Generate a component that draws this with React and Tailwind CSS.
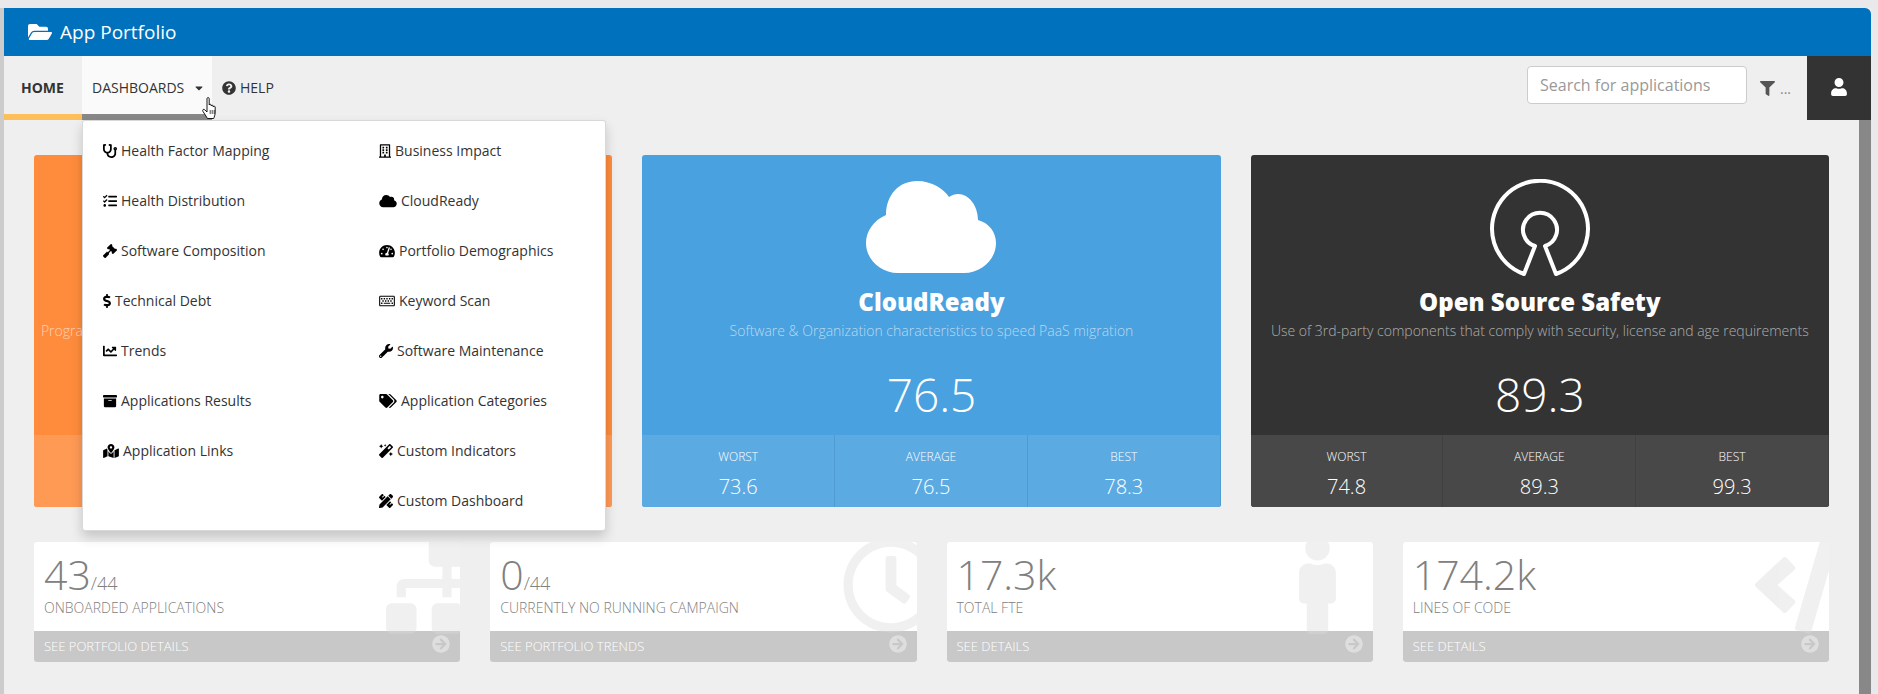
import {
  FaStethoscope, FaTasks, FaGavel, FaDollarSign, FaChartLine, FaArchive, FaMapMarkedAlt,
  FaRegBuilding, FaCloud, FaTachometerAlt, FaRegKeyboard, FaWrench, FaTags, FaMagic, FaPencilRuler,
  FaFolderOpen, FaQuestionCircle, FaFilter, FaUser, FaCaretDown, FaArrowCircleRight,
  FaSitemap, FaRegClock, FaMale, FaCode,
} from "react-icons/fa";

const leftMenu = [
  [FaStethoscope, "Health Factor Mapping", "w-[14px]"],
  [FaTasks, "Health Distribution", "w-[14px]"],
  [FaGavel, "Software Composition", "w-[14px]"],
  [FaDollarSign, "Technical Debt", "w-2"],
  [FaChartLine, "Trends", "w-[14px]"],
  [FaArchive, "Applications Results", "w-[14px]"],
  [FaMapMarkedAlt, "Application Links", "w-4"],
];

const rightMenu = [
  [FaRegBuilding, "Business Impact", "w-3"],
  [FaCloud, "CloudReady", "w-[18px]"],
  [FaTachometerAlt, "Portfolio Demographics", "w-4"],
  [FaRegKeyboard, "Keyword Scan", "w-4"],
  [FaWrench, "Software Maintenance", "w-[14px]"],
  [FaTags, "Application Categories", "w-[18px]"],
  [FaMagic, "Custom Indicators", "w-[14px]"],
  [FaPencilRuler, "Custom Dashboard", "w-[14px]"],
];

function CloudLogo() {
  return (
    <svg width="130" height="92" viewBox="0 0 130 92" className="mt-0.5" fill="#fff">
      <path d="M32 92C14 92 0 78 0 62C0 50 8 39 20 34C20 14 33 0 51 0C66 0 78 8 83 16C86 14 89 13 92 13C103 13 112 25 112 39C123 42 130 51 130 62C130 78 116 92 98 92Z" />
    </svg>
  );
}

function OpenSourceLogo() {
  return (
    <svg width="102" height="98" viewBox="0 0 102 98" fill="none" stroke="#fff" strokeWidth="4" strokeLinejoin="round">
      <path d="M35 95A48 48 0 1 1 67 95L56 67A17 17 0 1 0 46 67Z" />
    </svg>
  );
}

function HandCursor() {
  return (
    <svg width="18" height="23" viewBox="0 0 18 23" fill="#fff" stroke="#000" strokeWidth="0.9" className="absolute left-[197px] top-[41px] z-30">
      <path d="M6 1.5c0-1.2 2.2-1.2 2.2 0V8c0-1 2-1 2 0v1c0-1 2-1 2 0v1c0-1 2-1 2 0v5c0 3-1 5-1.5 6.5H6.5L2 14.5c-1-1.5.5-2.8 1.7-1.8L6 15Z" />
      <path d="M9.2 13v4M11.2 13v4M13.2 13v4" fill="none" strokeWidth="0.7" />
    </svg>
  );
}

function ScoreCard({ logo, title, desc, score, worst, best, bg, statBg, line }) {
  return (
    <div className={`rounded-[3px] flex flex-col h-[352px] overflow-hidden text-white ${bg}`}>
      <div className="h-[280px] pt-6 flex flex-col items-center text-center">
        <div className="h-[98px] flex justify-center">{logo}</div>
        <h2 className="mt-2 text-2xl leading-[33px] font-extrabold">{title}</h2>
        <p className="mt-[3px] text-sm leading-5 font-light text-white/60 whitespace-nowrap">{desc}</p>
        <div className="mt-5 text-[46px] leading-[66px] font-light">{score}</div>
      </div>
      <div className={`h-[72px] grid grid-cols-3 ${statBg}`}>
        {[["WORST", worst], ["AVERAGE", score], ["BEST", best]].map(([k, v]) => (
          <div key={k} className={`pt-[13px] text-center border-r ${line}`}>
            <div className="text-xs leading-[18px] font-light">{k}</div>
            <div className="mt-[7px] text-xl leading-7 font-light">{v}</div>
          </div>
        ))}
      </div>
    </div>
  );
}

function StatCard({ value, total, label, link, Icon, iconSize }) {
  return (
    <div className="relative h-[120px] rounded-[3px] overflow-hidden bg-white flex flex-col">
      <div className="h-[89px] pl-2.5 pt-[6px] text-[#808080]">
        <div className="h-[50px] flex items-baseline">
          <span className="text-[41px] leading-[52px] font-light">{value}</span>
          {total && <span className="text-lg font-light">{total}</span>}
        </div>
        <div className="text-sm leading-5 font-light uppercase">{label}</div>
      </div>
      <div className="h-[31px] pl-2.5 bg-[#c8c8c8] text-white text-[13px] font-light leading-[31px]">{link}</div>
      <Icon className={`absolute left-[352px] top-[-6px] h-[98px] text-[#d9d9d9] opacity-40 ${iconSize}`} />
      <FaArrowCircleRight className="absolute right-[10px] bottom-[9px] text-[18px] text-white/40" />
    </div>
  );
}

function MenuItem({ Icon, label, width }) {
  return (
    <a className="h-[50px] flex items-center gap-1 text-sm text-[#333]">
      <Icon className={`h-[14px] text-black shrink-0 ${width}`} />
      {label}
    </a>
  );
}

export default function App() {
  return (
    <div className="h-[694px] w-full overflow-hidden bg-[#e9e9eb] pt-2 pr-[7px] font-['Open_Sans',sans-serif]">
      <div className="h-full flex flex-col bg-[#efefef] border-l-4 border-[#cccccc]">
        <header className="h-12 shrink-0 bg-[#0071bc] rounded-tr-md flex items-center pl-6 text-white">
          <FaFolderOpen className="text-2xl" />
          <span className="ml-2 text-[19px]">App Portfolio</span>
        </header>

        <nav className="relative h-16 shrink-0 flex items-stretch text-[#333]">
          <div className="w-[78px] border-b-[6px] border-[#fdbf5c] flex items-center pt-[6px] pl-[17px] text-sm font-bold">HOME</div>
          <div className="w-[130px] bg-[#fafafa] border-b-[6px] border-[#888] flex items-center pt-[6px] pl-[10px] text-sm">
            DASHBOARDS
            <FaCaretDown className="ml-[9px] text-xs" />
          </div>
          <div className="flex items-center ml-[10px] text-sm">
            <FaQuestionCircle className="mr-1 text-sm" />
            HELP
          </div>
          <div className="ml-auto flex items-start">
            <input
              placeholder="Search for applications"
              className="mt-[10px] w-[220px] h-[38px] px-3 bg-white border border-[#ccc] rounded-[4px] text-base placeholder:text-[#999]"
            />
            <div className="mt-[25px] ml-[13px] w-[47px] flex items-center text-[#555]">
              <FaFilter className="text-[15px]" />
              <span className="ml-[5px] text-sm leading-none text-[#888]">...</span>
            </div>
            <div className="w-16 h-16 bg-[#333] flex items-center justify-center text-white">
              <FaUser className="text-lg mb-[3px]" />
            </div>
          </div>

          <div className="absolute left-[78px] top-16 z-20 w-[524px] h-[411px] py-[5px] px-5 bg-white border border-black/15 rounded-[3px] shadow-[0_6px_12px_rgba(0,0,0,0.175)] grid grid-cols-[276px_1fr]">
            <div>{leftMenu.map(([Icon, label, width]) => <MenuItem key={label} Icon={Icon} label={label} width={width} />)}</div>
            <div>{rightMenu.map(([Icon, label, width]) => <MenuItem key={label} Icon={Icon} label={label} width={width} />)}</div>
          </div>

          <HandCursor />
        </nav>

        <div className="flex-1 min-h-0 flex">
          <main className="flex-1 min-w-0 px-[30px] pt-[35px]">
            <div className="grid grid-cols-3 gap-[30px]">
              {/* most of this card sits behind the open menu */}
              <div className="rounded-[3px] flex flex-col h-[352px] overflow-hidden bg-[#ff8c3c]">
                <div className="h-[280px] pt-[166px] flex justify-center">
                  <p className="text-sm leading-5 font-light text-white/60 whitespace-nowrap">Programming practices that impact Software Resiliency, Agility and Elegance of the source.</p>
                </div>
                <div className="h-[72px] bg-[#ff9a55]" />
              </div>
              <ScoreCard
                logo={<CloudLogo />}
                title="CloudReady"
                desc="Software & Organization characteristics to speed PaaS migration"
                score="76.5"
                worst="73.6"
                best="78.3"
                bg="bg-[#49a1df]"
                statBg="bg-[#5caae2]"
                line="border-[#4f9bd2]"
              />
              <ScoreCard
                logo={<OpenSourceLogo />}
                title="Open Source Safety"
                desc="Use of 3rd-party components that comply with security, license and age requirements"
                score="89.3"
                worst="74.8"
                best="99.3"
                bg="bg-[#333333]"
                statBg="bg-[#484848]"
                line="border-[#404040]"
              />
            </div>

            <div className="mt-[35px] grid grid-cols-4 gap-[30px]">
              <StatCard value="43" total="/44" label="Onboarded Applications" link="SEE PORTFOLIO DETAILS" Icon={FaSitemap} iconSize="w-[122px]" />
              <StatCard value="0" total="/44" label="Currently no running campaign" link="SEE PORTFOLIO TRENDS" Icon={FaRegClock} iconSize="w-[98px]" />
              <StatCard value="17.3k" label="Total FTE" link="SEE DETAILS" Icon={FaMale} iconSize="w-[37px]" />
              <StatCard value="174.2k" label="Lines of code" link="SEE DETAILS" Icon={FaCode} iconSize="w-[122px]" />
            </div>
          </main>
          <div className="w-3 shrink-0 bg-[#888]" />
        </div>
      </div>
    </div>
  );
}
